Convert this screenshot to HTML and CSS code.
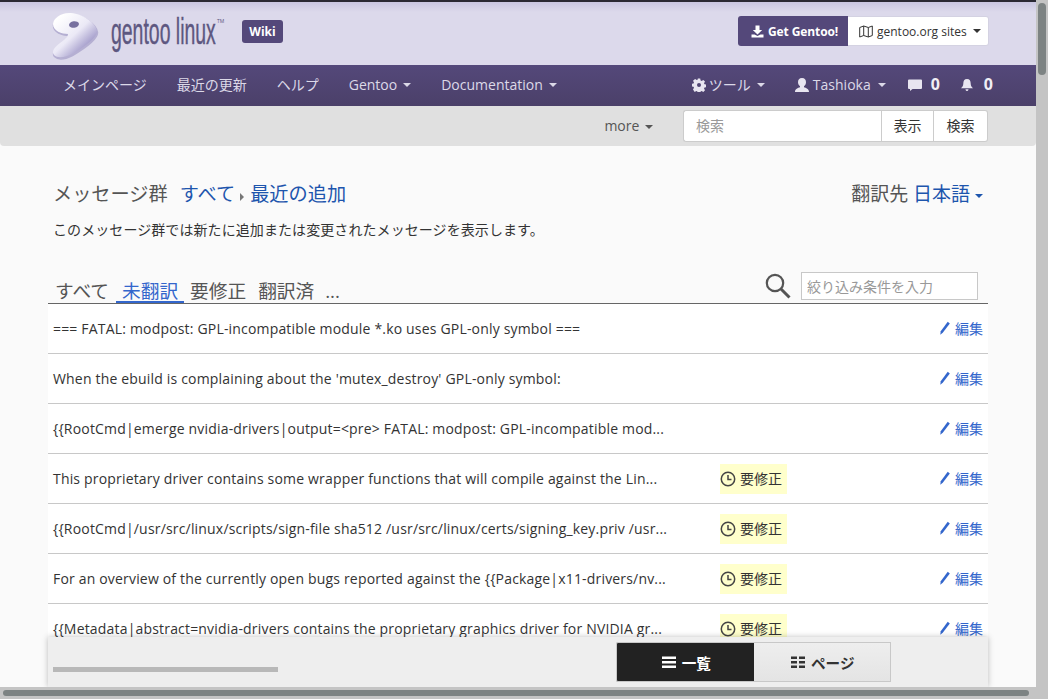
FILE: index.html
```html
<!DOCTYPE html>
<html>
<head>
  <meta charset="UTF-8">
  <title>メッセージ群</title>
  <link rel="stylesheet" href="styles.css">
</head>
<body>
<div class="window">
  <div class="page">
    <header class="site-top">
      <a class="logo">
        <svg class="logo-mark" width="52" height="52" viewBox="0 0 52 52">
          <defs>
            <linearGradient id="markfill" x1="0.15" y1="0.1" x2="0.85" y2="0.85">
              <stop offset="0" stop-color="#ffffff"/>
              <stop offset="0.5" stop-color="#ebe9f6"/>
              <stop offset="1" stop-color="#8d84bd"/>
            </linearGradient>
          </defs>
          <path d="M5 14C5 8 14 2 23 3C35 4 48 13 49 21C49 28 36 37 24 44C18 47 10 49 6 45C3 41 7 37 12 33C16 30 20 27 20 24C14 24 5 21 5 14Z" fill="#8f87bb" opacity="0.5" transform="translate(0.500 1.500)" stroke="#8f87bb" stroke-width="1.500"/>
          <path d="M5 14C5 8 14 2 23 3C35 4 48 13 49 21C49 28 36 37 24 44C18 47 10 49 6 45C3 41 7 37 12 33C16 30 20 27 20 24C14 24 5 21 5 14Z" fill="url(#markfill)"/>
          <ellipse cx="26" cy="14.500" rx="5" ry="3.200" fill="#77709f" transform="rotate(-8 26 14.500)"/>
        </svg>
        <span class="logo-text">gentoo linux</span><span class="logo-tm">TM</span>
      </a>
      <span class="wiki-badge">Wiki</span>
      <div class="top-buttons">
        <a class="btn-get">
          <svg width="13" height="13" viewBox="0 0 13 13"><path d="M4.500 0.500h4v4.500h2.700L6.500 9.500 1.800 5h2.700zM0.500 9.500h3l3 1.500 3-1.500h3v3h-12z" fill="#fff"/></svg>
          Get Gentoo!
        </a>
        <a class="btn-sites">
          <svg width="14" height="13" viewBox="0 0 14 13"><path d="M0.700 2.500L4.700 1 9.300 2.500 13.300 1V10.500L9.300 12 4.700 10.500 0.700 12zM4.700 1V10.500M9.300 2.500V12" fill="none" stroke="#333" stroke-width="1"/></svg>
          gentoo.org sites <i class="caret"></i>
        </a>
      </div>
    </header>

    <nav class="main-nav">
      <div class="nav-group">
        <a>メインページ</a>
        <a>最近の更新</a>
        <a>ヘルプ</a>
        <a>Gentoo <i class="caret"></i></a>
        <a>Documentation <i class="caret"></i></a>
      </div>
      <div class="nav-group nav-right">
        <a>
          <svg width="14" height="14" viewBox="0 0 14 14"><path fill-rule="evenodd" d="M5.800 0.500h2.400l.4 1.900 1.100.5 1.600-1 1.700 1.700-1 1.600.5 1.100 1.900.4v2.400l-1.900.4-.5 1.100 1 1.600-1.700 1.700-1.600-1-1.100.5-.4 1.900H5.800l-.4-1.900-1.100-.5-1.600 1L1 11.400l1-1.600-.5-1.100L-.4 8.300V5.900l1.900-.4.500-1.100-1-1.600L3.100 1.100l1.600 1 1.100-.5zM7 5a2 2 0 1 0 0 4 2 2 0 1 0 0-4z" fill="#e8e5f0"/></svg>
          ツール <i class="caret"></i>
        </a>
        <a class="nav-user">
          <svg width="14" height="14" viewBox="0 0 14 14"><path d="M7 0C9.800 0 11 2 11 4.200 11 6 10 7.500 9 8.300V9.300C11 10 14 10.800 14 14H0C0 10.800 3 10 5 9.300V8.300C4 7.500 3 6 3 4.200 3 2 4.200 0 7 0Z" fill="#e8e5f0"/></svg>
          Tashioka <i class="caret"></i>
        </a>
        <a class="nav-count">
          <svg width="14" height="12" viewBox="0 0 14 12"><path d="M1 0.500H13Q14 0.500 14 1.500V9Q14 10 13 10H4.500L2 12V10H1Q0 10 0 9V1.500Q0 0.500 1 0.500Z" fill="#e8e5f0"/></svg>
          <b>0</b>
        </a>
        <a class="nav-count bell">
          <svg width="12" height="14" viewBox="0 0 13 14"><path d="M6.500 0.500C9.500 0.500 10.500 2.500 10.500 5.500 10.500 8 11.500 9.500 13 10.500H0C1.500 9.500 2.500 8 2.500 5.500 2.500 2.500 3.500 0.500 6.500 0.500ZM4.800 11.500H8.200Q7.800 13.500 6.500 13.500 5.200 13.500 4.800 11.500Z" fill="#e8e5f0"/></svg>
          <b>0</b>
        </a>
      </div>
    </nav>

    <div class="sub-nav">
      <a class="more">more <i class="caret"></i></a>
      <div class="search-group">
        <input class="search-input" placeholder="検索">
        <button>表示</button>
        <button>検索</button>
      </div>
    </div>

    <main class="content">
      <div class="group-head">
        <h2>メッセージ群 <a class="first">すべて</a><i class="crumb-arrow"></i><a>最近の追加</a></h2>
        <div class="lang">翻訳先 <a>日本語 <i class="caret"></i></a></div>
      </div>
      <p class="group-desc">このメッセージ群では新たに追加または変更されたメッセージを表示します。</p>

      <div class="filter-tabs">
        <ul>
          <li>すべて</li>
          <li class="active">未翻訳</li>
          <li>要修正</li>
          <li>翻訳済</li>
          <li class="dots">...</li>
        </ul>
        <div class="filter-box">
          <svg width="26" height="26" viewBox="0 0 26 26"><circle cx="10" cy="10" r="8.200" fill="none" stroke="#555" stroke-width="2.200"/><path d="M16 16L24.500 24.500" stroke="#555" stroke-width="3"/></svg>
          <input placeholder="絞り込み条件を入力">
        </div>
      </div>

      <div class="msg-list">
        <div class="msg-row">
          <span class="msg-text">=== FATAL: modpost: GPL-incompatible module *.ko uses GPL-only symbol ===</span>
          <span class="msg-status"></span>
          <a class="msg-edit"><svg width="10" height="14" viewBox="0 0 11 15"><path d="M8.500 0.500L10.800 2.500 3 12.800 0.300 14.800 0.800 11.200Z" fill="#36c"/></svg>編集</a>
        </div>
        <div class="msg-row">
          <span class="msg-text">When the ebuild is complaining about the 'mutex_destroy' GPL-only symbol:</span>
          <span class="msg-status"></span>
          <a class="msg-edit"><svg width="10" height="14" viewBox="0 0 11 15"><path d="M8.500 0.500L10.800 2.500 3 12.800 0.300 14.800 0.800 11.200Z" fill="#36c"/></svg>編集</a>
        </div>
        <div class="msg-row">
          <span class="msg-text">{{RootCmd|emerge nvidia-drivers|output=&lt;pre&gt; FATAL: modpost: GPL-incompatible mod...</span>
          <span class="msg-status"></span>
          <a class="msg-edit"><svg width="10" height="14" viewBox="0 0 11 15"><path d="M8.500 0.500L10.800 2.500 3 12.800 0.300 14.800 0.800 11.200Z" fill="#36c"/></svg>編集</a>
        </div>
        <div class="msg-row">
          <span class="msg-text">This proprietary driver contains some wrapper functions that will compile against the Lin...</span>
          <span class="msg-status"><span class="fuzzy"><svg width="16" height="16" viewBox="0 0 16 16"><circle cx="8" cy="8" r="6.700" fill="none" stroke="#444" stroke-width="1.500"/><path d="M8 4V8.500H11.500" fill="none" stroke="#444" stroke-width="1.500"/></svg>要修正</span></span>
          <a class="msg-edit"><svg width="10" height="14" viewBox="0 0 11 15"><path d="M8.500 0.500L10.800 2.500 3 12.800 0.300 14.800 0.800 11.200Z" fill="#36c"/></svg>編集</a>
        </div>
        <div class="msg-row">
          <span class="msg-text">{{RootCmd|/usr/src/linux/scripts/sign-file sha512 /usr/src/linux/certs/signing_key.priv /usr...</span>
          <span class="msg-status"><span class="fuzzy"><svg width="16" height="16" viewBox="0 0 16 16"><circle cx="8" cy="8" r="6.700" fill="none" stroke="#444" stroke-width="1.500"/><path d="M8 4V8.500H11.500" fill="none" stroke="#444" stroke-width="1.500"/></svg>要修正</span></span>
          <a class="msg-edit"><svg width="10" height="14" viewBox="0 0 11 15"><path d="M8.500 0.500L10.800 2.500 3 12.800 0.300 14.800 0.800 11.200Z" fill="#36c"/></svg>編集</a>
        </div>
        <div class="msg-row">
          <span class="msg-text">For an overview of the currently open bugs reported against the {{Package|x11-drivers/nv...</span>
          <span class="msg-status"><span class="fuzzy"><svg width="16" height="16" viewBox="0 0 16 16"><circle cx="8" cy="8" r="6.700" fill="none" stroke="#444" stroke-width="1.500"/><path d="M8 4V8.500H11.500" fill="none" stroke="#444" stroke-width="1.500"/></svg>要修正</span></span>
          <a class="msg-edit"><svg width="10" height="14" viewBox="0 0 11 15"><path d="M8.500 0.500L10.800 2.500 3 12.800 0.300 14.800 0.800 11.200Z" fill="#36c"/></svg>編集</a>
        </div>
        <div class="msg-row">
          <span class="msg-text">{{Metadata|abstract=nvidia-drivers contains the proprietary graphics driver for NVIDIA gr...</span>
          <span class="msg-status"><span class="fuzzy"><svg width="16" height="16" viewBox="0 0 16 16"><circle cx="8" cy="8" r="6.700" fill="none" stroke="#444" stroke-width="1.500"/><path d="M8 4V8.500H11.500" fill="none" stroke="#444" stroke-width="1.500"/></svg>要修正</span></span>
          <a class="msg-edit"><svg width="10" height="14" viewBox="0 0 11 15"><path d="M8.500 0.500L10.800 2.500 3 12.800 0.300 14.800 0.800 11.200Z" fill="#36c"/></svg>編集</a>
        </div>
      </div>
    </main>

    <div class="action-bar">
      <div class="progress"></div>
      <div class="view-switch">
        <a class="view-on">
          <svg width="14" height="13" viewBox="0 0 14 13"><path d="M0 0.500H14V3H0zM0 5H14V7.500H0zM0 9.500H14V12H0z" fill="#fff"/></svg>
          一覧
        </a>
        <a>
          <svg width="14" height="13" viewBox="0 0 14 13"><path d="M0 0.500H6V3H0zM8 0.500H14V3H8zM0 5H6V7.500H0zM8 5H14V7.500H8zM0 9.500H6V12H0zM8 9.500H14V12H8z" fill="#333"/></svg>
          ページ
        </a>
      </div>
    </div>
  </div>

  <div class="scroll-y"><div class="thumb-y"></div></div>
  <div class="scroll-x"><div class="thumb-x"></div></div>
  <div class="scroll-corner"></div>
</div>
</body>
</html>
```

FILE: styles.css
```css
* {
  box-sizing: border-box;
}
html, body {
  margin: 0;
  height: 699px;
  overflow: hidden;
}
body {
  font-family: "Open Sans", "Noto Sans CJK JP", sans-serif;
  font-size: 14px;
  color: #333;
  background: #fafafa;
}
a {
  text-decoration: none;
}
.window {
  display: grid;
  grid-template-columns: 1036px 12px;
  grid-template-rows: 687px 12px;
  height: 699px;
}
.page {
  position: relative;
  overflow: hidden;
  background: #fafafa;
}
.caret {
  display: inline-block;
  width: 0;
  height: 0;
  margin-left: 2px;
  vertical-align: middle;
  border-top: 4px solid currentColor;
  border-left: 4px solid transparent;
  border-right: 4px solid transparent;
}

/* scrollbars */
.scroll-y {
  background: #c4c4c4;
  padding: 3px 2px;
}
.thumb-y {
  width: 8px;
  height: 72px;
  border-radius: 4px;
  background: #7d8383;
}
.scroll-x {
  background: #c4c4c4;
  padding: 3px 7px 3px 3px;
}
.thumb-x {
  height: 6px;
  border-radius: 3px;
  background: #7d8383;
}
.scroll-corner {
  background: #c4c4c4;
}

/* top */
.site-top {
  height: 65px;
  display: flex;
  align-items: flex-start;
  padding: 0 47px 0 48px;
  border-top: 2px solid #2a2833;
  background: linear-gradient(#c9c5e0, #dcd9eb 10px);
}
.logo {
  display: flex;
  width: 194px;
  padding-top: 8px;
}
.logo-text {
  margin: 2px 0 0 11px;
  width: 106px;
  font-family: "Liberation Sans Narrow", "Liberation Sans", sans-serif;
  font-size: 36px;
  line-height: 40px;
  color: #5d5780;
  -webkit-text-stroke: 0.4px #5d5780;
  white-space: nowrap;
  transform: scaleX(0.54);
  transform-origin: left center;
}
.logo-tm {
  font-size: 5px;
  line-height: 8px;
  color: #5d5780;
  margin-top: 7px;
}
.wiki-badge {
  margin-top: 18px;
  width: 41px;
  height: 23px;
  line-height: 23px;
  border-radius: 3px;
  background: #54487a;
  color: #fff;
  font-weight: 700;
  font-size: 12px;
  text-align: center;
}
.top-buttons {
  display: flex;
  margin: 14px 0 0 auto;
  height: 30px;
}
.btn-get {
  display: flex;
  align-items: center;
  gap: 4px;
  width: 110px;
  padding-left: 13px;
  background: #54487a;
  color: #fff;
  font-size: 12px;
  letter-spacing: -0.1px;
  font-weight: 700;
  border-radius: 3px 0 0 3px;
}
.btn-sites {
  display: flex;
  align-items: center;
  gap: 4px;
  width: 141px;
  padding-left: 11px;
  background: #fff;
  color: #333;
  font-size: 12px;
  border: 1px solid #d4d2e2;
  border-left: 0;
  border-radius: 0 3px 3px 0;
}

/* nav */
.main-nav {
  height: 41px;
  display: flex;
  justify-content: space-between;
  padding: 0 43px 0 48px;
  background: linear-gradient(#54487a, #4b4069);
  line-height: 41px;
}
.nav-group {
  display: flex;
}
.nav-group a {
  display: flex;
  align-items: center;
  gap: 3px;
  padding: 0 15px 2px;
  color: #dcd9e8;
  white-space: nowrap;
}
.nav-group .caret {
  margin-left: 3px;
}
.nav-right a {
  padding: 0 0 2px;
  margin-left: 30px;
}
.nav-right a.nav-user {
  gap: 4px;
}
.nav-right a.nav-count {
  gap: 9px;
  margin-left: 22px;
}
.nav-right a.bell {
  gap: 11px;
  margin-left: 21px;
}
.nav-count b {
  font-size: 16px;
  color: #f0eef5;
}

/* sub nav */
.sub-nav {
  height: 40px;
  display: flex;
  align-items: flex-start;
  justify-content: flex-end;
  padding: 4px 48px 0 0;
  background: #e0e0e0;
  border-radius: 0 0 4px 4px;
}
.more {
  margin-right: 30px;
  line-height: 32px;
  color: #555;
}
.search-group {
  display: flex;
  height: 32px;
  width: 305px;
}
.search-input {
  width: 198px;
  padding: 0 12px 2px;
  border: 1px solid #ccc;
  border-right: 0;
  border-radius: 3px 0 0 3px;
  background: #fff;
  font: inherit;
}
.search-input::placeholder {
  color: #999;
}
.search-group button {
  width: 53px;
  padding: 0 0 2px;
  border: 1px solid #ccc;
  background: #fff;
  color: #333;
  font: inherit;
}
.search-group button:last-child {
  width: 54px;
  border-left: 0;
  border-radius: 0 3px 3px 0;
}

/* content */
.content {
  padding: 0 48px;
}
.group-head {
  display: flex;
  justify-content: space-between;
  align-items: baseline;
  padding: 32px 5px 0;
  height: 74px;
  font-size: 19px;
  line-height: 32px;
  color: #555;
}
.group-head h2 {
  margin: 0;
  font-size: 19.200px;
  font-weight: 400;
}
.group-head a {
  color: #1d55ad;
}
.group-head .first {
  margin-left: 7px;
}
.crumb-arrow {
  display: inline-block;
  width: 0;
  height: 0;
  margin: 0 6px 0 5px;
  border-left: 4px solid #777;
  border-top: 4px solid transparent;
  border-bottom: 4px solid transparent;
}
.lang .caret {
  margin-left: 0;
}
.group-desc {
  margin: 0;
  padding: 1px 5px 0;
  height: 51px;
  line-height: 18px;
  letter-spacing: 0.08px;
  color: #333;
}
.filter-tabs {
  display: flex;
  justify-content: space-between;
  height: 33px;
  border-bottom: 1px solid #666;
  padding-left: 1px;
}
.filter-tabs ul {
  display: flex;
  margin: 0;
  padding: 0;
  list-style: none;
  font-size: 18.700px;
  line-height: 40px;
  color: #555;
}
.filter-tabs li {
  padding: 0 6px;
  height: 32px;
}
.filter-tabs li.active {
  margin-left: 1px;
  color: #36c;
  border-bottom: 2px solid #36c;
}
.filter-tabs li.dots {
  padding-left: 5px;
}
.filter-box {
  display: flex;
  align-items: flex-start;
  gap: 10px;
  padding-right: 10px;
}
.filter-box svg {
  margin-top: 2px;
}
.filter-box input {
  width: 177px;
  height: 28px;
  margin-top: 1px;
  padding: 0 5px;
  border: 1px solid #c8c8c8;
  background: #fff;
  font: inherit;
}
.filter-box input::placeholder {
  color: #999;
}
.msg-list {
  background: #fff;
}
.msg-row {
  display: flex;
  align-items: center;
  height: 50px;
  padding: 0 5px;
  border-bottom: 1px solid #c8c8c8;
}
.msg-text {
  width: 615px;
  flex: none;
  white-space: nowrap;
  letter-spacing: 0.18px;
  color: #333;
}
.msg-status {
  display: flex;
  width: 67px;
  flex: none;
  margin-left: 52px;
}
.fuzzy {
  display: flex;
  align-items: center;
  gap: 4px;
  width: 67px;
  height: 30px;
  padding-bottom: 1px;
  background: #ffc;
  color: #333;
}
.fuzzy svg {
  margin-top: 1px;
}
.msg-edit {
  margin-left: auto;
  display: flex;
  align-items: center;
  gap: 5px;
  padding-bottom: 2px;
  color: #36c;
}

/* bottom bar */
.action-bar {
  position: absolute;
  left: 48px;
  bottom: 0;
  width: 940px;
  height: 50px;
  display: flex;
  justify-content: space-between;
  background: #eee;
  box-shadow: 0 0 6px rgba(0, 0, 0, 0.25);
}
.progress {
  width: 225px;
  height: 5px;
  margin: 30px 0 0 5px;
  background: #b8b8b8;
}
.view-switch {
  display: flex;
  width: 275px;
  height: 40px;
  margin: 5px 97px 0 0;
  font-size: 14.600px;
  font-weight: 700;
}
.view-switch a {
  flex: 1;
  display: flex;
  align-items: center;
  justify-content: center;
  gap: 6px;
  padding-left: 2px;
  color: #333;
  background: linear-gradient(#eee, #e4e4e4);
  border: 1px solid #c8c8c8;
  border-left: 0;
}
.view-switch a.view-on {
  background: #222;
  color: #fff;
  border: 1px solid #c8c8c8;
  border-right: 0;
  border-radius: 2px 0 0 2px;
}
```
